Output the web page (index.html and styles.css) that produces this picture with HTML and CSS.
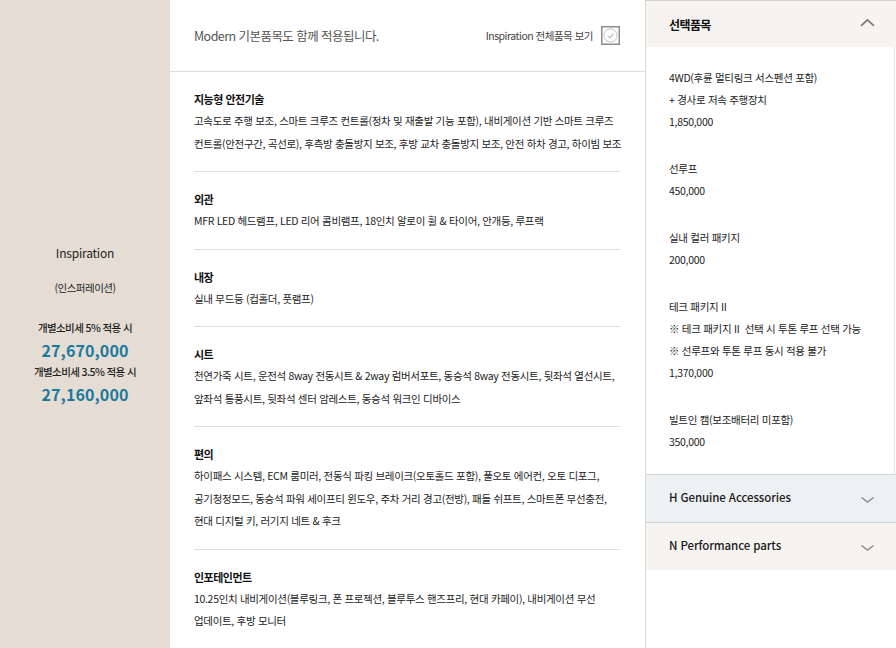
FILE: index.html
```html
<!DOCTYPE html>
<html lang="ko">
<head>
<meta charset="utf-8">
<title>Inspiration</title>
<link rel="stylesheet" href="styles.css">
</head>
<body>
<div class="page">
  <aside class="trim">
    <div class="trim-name">Inspiration</div>
    <div class="trim-kr">(인스퍼레이션)</div>
    <div class="price-block">
      <div class="price-label">개별소비세 5% 적용 시</div>
      <div class="price">27,670,000</div>
      <div class="price-label">개별소비세 3.5% 적용 시</div>
      <div class="price">27,160,000</div>
    </div>
  </aside>

  <main class="spec">
    <header class="spec-head">
      <p class="spec-note">Modern 기본품목도 함께 적용됩니다.</p>
      <label class="view-all">
        <span>Inspiration 전체품목 보기</span>
        <svg class="check" width="19" height="19" viewBox="0 0 19 19">
          <rect x="0.75" y="0.75" width="17.5" height="17.5" fill="#fff" stroke="#8c8c8c" stroke-width="1.5"/>
          <circle cx="9.5" cy="9.5" r="6.6" fill="none" stroke="#cfcfcf" stroke-width="1.1"/>
          <path d="M6.6 9.6 L8.8 11.6 L12.5 7.6" fill="none" stroke="#bdbdbd" stroke-width="1.2"/>
        </svg>
      </label>
    </header>
    <div class="spec-body">
      <section class="spec-group">
        <h3>지능형 안전기술</h3>
        <p>고속도로 주행 보조, 스마트 크루즈 컨트롤(정차 및 재출발 기능 포함), 내비게이션 기반 스마트 크루즈<br>컨트롤(안전구간, 곡선로), 후측방 충돌방지 보조, 후방 교차 충돌방지 보조, 안전 하차 경고, 하이빔 보조</p>
      </section>
      <section class="spec-group">
        <h3>외관</h3>
        <p>MFR LED 헤드램프, LED 리어 콤비램프, 18인치 알로이 휠 &amp; 타이어, 안개등, 루프랙</p>
      </section>
      <section class="spec-group">
        <h3>내장</h3>
        <p>실내 무드등 (컵홀더, 풋램프)</p>
      </section>
      <section class="spec-group">
        <h3>시트</h3>
        <p>천연가죽 시트, 운전석 8way 전동시트 &amp; 2way 럼버서포트, 동승석 8way 전동시트, 뒷좌석 열선시트,<br>앞좌석 통풍시트, 뒷좌석 센터 암레스트, 동승석 워크인 디바이스</p>
      </section>
      <section class="spec-group">
        <h3>편의</h3>
        <p>하이패스 시스템, ECM 룸미러, 전동식 파킹 브레이크(오토홀드 포함), 풀오토 에어컨, 오토 디포그,<br>공기청정모드, 동승석 파워 세이프티 윈도우, 주차 거리 경고(전방), 패들 쉬프트, 스마트폰 무선충전,<br>현대 디지털 키, 러기지 네트 &amp; 후크</p>
      </section>
      <section class="spec-group">
        <h3>인포테인먼트</h3>
        <p>10.25인치 내비게이션(블루링크, 폰 프로젝션, 블루투스 핸즈프리, 현대 카페이), 내비게이션 무선<br>업데이트, 후방 모니터</p>
      </section>
    </div>
  </main>

  <aside class="options">
    <div class="opt-head">
      <span>선택품목</span>
      <svg class="chev" width="15" height="10" viewBox="0 0 15 10"><path d="M1 7.8 L7.5 1.8 L14 7.8" fill="none" stroke="#777" stroke-width="1.6"/></svg>
    </div>
    <ul class="opt-list">
      <li>4WD(후륜 멀티링크 서스펜션 포함)<br>+ 경사로 저속 주행장치<br>1,850,000</li>
      <li>선루프<br>450,000</li>
      <li>실내 컬러 패키지<br>200,000</li>
      <li>테크 패키지 II<br>※ 테크 패키지 II&nbsp; 선택 시 투톤 루프 선택 가능<br>※ 선루프와 투톤 루프 동시 적용 불가<br>1,370,000</li>
      <li>빌트인 캠(보조배터리 미포함)<br>350,000</li>
    </ul>
    <div class="acc acc-cool">
      <span>H Genuine Accessories</span>
      <svg class="chev down" width="15" height="10" viewBox="0 0 15 10"><path d="M1.5 2.5 L7.5 7 L13.5 2.5" fill="none" stroke="#888" stroke-width="1.4"/></svg>
    </div>
    <div class="acc acc-warm">
      <span>N Performance parts</span>
      <svg class="chev down" width="15" height="10" viewBox="0 0 15 10"><path d="M1.5 2.5 L7.5 7 L13.5 2.5" fill="none" stroke="#888" stroke-width="1.4"/></svg>
    </div>
  </aside>
</div>
</body>
</html>
```

FILE: styles.css
```css
* { box-sizing: border-box; }
html, body { margin: 0; padding: 0; }
body {
  width: 896px;
  height: 648px;
  overflow: hidden;
  font-family: "Noto Sans CJK KR", "Noto Sans", sans-serif;
  color: #222;
  background: #fff;
}
.page {
  display: flex;
  height: 648px;
}

/* left trim column */
.trim {
  width: 170px;
  flex: none;
  background: #e5ddd4;
  display: flex;
  flex-direction: column;
  justify-content: center;
  align-items: center;
  text-align: center;
}
.trim-name {
  font-size: 12px;
  line-height: 20px;
  color: #1d1d1d;
  letter-spacing: -0.2px;
}
.trim-kr {
  margin-top: 15px;
  font-size: 10.5px;
  line-height: 20px;
  letter-spacing: -0.5px;
  color: #222;
}
.price-block { margin-top: 20px; }
.price-label {
  font-size: 10.5px;
  line-height: 20px;
  letter-spacing: -0.6px;
  font-weight: 500;
  color: #1d1d1d;
}
.price {
  font-size: 16px;
  line-height: 24px;
  font-weight: 700;
  color: #1b7a9c;
  letter-spacing: 0.1px;
}

/* middle spec column */
.spec {
  width: 475px;
  flex: none;
}
.spec-head {
  height: 72px;
  border-bottom: 1px solid #dedede;
  padding: 0 25px 0 24px;
  display: flex;
  align-items: center;
  justify-content: space-between;
}
.spec-note {
  margin: 0;
  font-size: 12.5px;
  letter-spacing: -0.55px;
  color: #555;
}
.view-all {
  display: flex;
  align-items: center;
  gap: 8px;
  font-size: 10.5px;
  letter-spacing: -0.5px;
  color: #444;
}
.check { display: block; }
.spec-body { padding: 0 25px 0 24px; }
.spec-group {
  padding: 16px 0;
  border-bottom: 1px solid #dedede;
}
.spec-group:last-child { border-bottom: none; }
.spec-group h3 {
  margin: 0;
  font-size: 11px;
  line-height: 22px;
  font-weight: 700;
  letter-spacing: -0.5px;
  color: #111;
}
.spec-group p {
  margin: 0;
  font-size: 10.5px;
  line-height: 22.5px;
  letter-spacing: -0.32px;
  color: #222;
  white-space: nowrap;
}

/* right options column */
.options {
  width: 251px;
  flex: none;
  border-left: 1px solid #dcdcdc;
  display: flex;
  flex-direction: column;
}
.opt-head {
  height: 47px;
  border-top: 1px solid #d0d0d0;
  background: #f6f3f1;
  padding: 0 21px 0 23px;
  display: flex;
  align-items: center;
  justify-content: space-between;
  font-size: 12px;
  font-weight: 700;
  letter-spacing: -0.6px;
  color: #111;
}
.opt-head .chev { margin-top: -2px; }
.opt-list {
  list-style: none;
  margin: 0 1px 0 0;
  padding: 20px 0 21px 23px;
  border-right: 1px solid #e2e2e2;
}
.opt-list li {
  font-size: 10.5px;
  line-height: 22px;
  letter-spacing: -0.3px;
  color: #222;
  margin-bottom: 25px;
  white-space: nowrap;
}
.opt-list li:last-child { margin-bottom: 0; }
.acc {
  height: 48px;
  border-top: 1px solid #d4d4d4;
  padding: 0 21px 3px 23px;
  display: flex;
  align-items: center;
  justify-content: space-between;
  font-size: 11.5px;
  font-weight: 500;
  letter-spacing: -0.1px;
  color: #1a1a1a;
}
.acc .chev { margin-top: 6px; }
.acc-cool { background: #eef1f3; }
.acc-warm { background: #f6f3f1; }
```
